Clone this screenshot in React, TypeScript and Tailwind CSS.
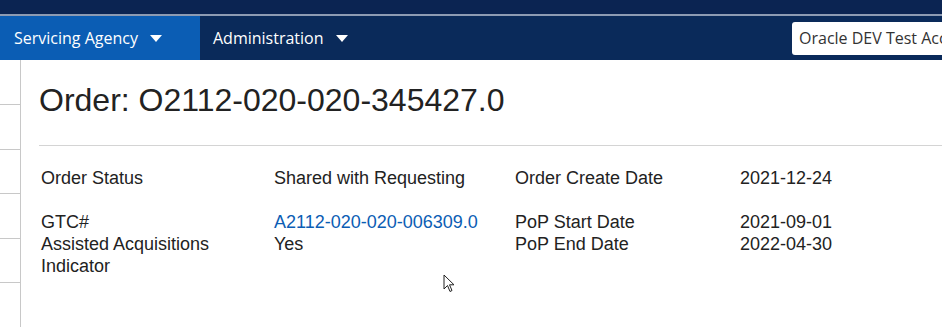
function Caret() {
  return (
    <svg width="12" height="7" viewBox="0 0 12 7" className="ml-[12px]">
      <path d="M0 0 L12 0 L6 7 Z" fill="white" />
    </svg>
  );
}

function Cursor() {
  return (
    <svg width="14" height="20" viewBox="0 0 14 20" className="absolute left-[443px] top-[274px]">
      <path d="M1 1 L1 15 L4.5 11.5 L7 17.5 L9 16.5 L6.5 10.8 L11 10.8 Z" fill="white" stroke="#222" strokeWidth="1" strokeLinejoin="round" />
    </svg>
  );
}

export default function App() {
  return (
    <div className="relative w-[942px] h-[327px] overflow-hidden bg-white" style={{ fontFamily: "Arial, 'Liberation Sans', sans-serif" }}>
      <div className="h-[14px] bg-[#0b2452]" />
      <div className="h-[2px] bg-[#8d9bb3]" />
      <nav className="h-[44px] bg-[#0a2a5a] flex items-center text-white text-[16px]" style={{ fontFamily: "'Open Sans', 'Noto Sans', sans-serif" }}>
        <div className="h-full w-[200px] bg-[#0b5db4] flex items-center pl-[14px]">
          Servicing Agency
          <Caret />
        </div>
        <div className="h-full flex items-center pl-[13px]">
          Administration
          <Caret />
        </div>
        <div className="ml-auto mr-[-30px] w-[180px] h-[33px] bg-white rounded-[3px] flex items-center pl-[7px] text-[#333] whitespace-nowrap overflow-hidden">
          Oracle DEV Test Account
        </div>
      </nav>
      <div className="flex">
        <div className="w-[21px] h-[267px] border-r border-[#c8c8c8] flex flex-col pt-[44px]">
          <div className="h-[45px] border-t border-[#c8c8c8]" />
          <div className="h-[45px] border-t border-[#c8c8c8]" />
          <div className="h-[45px] border-t border-[#c8c8c8]" />
          <div className="h-[45px] border-t border-[#c8c8c8]" />
          <div className="h-[45px] border-t border-[#c8c8c8]" />
        </div>
        <main className="flex-1 pl-[18px] text-[#222]">
          <h1 className="text-[32px] leading-[36px] mt-[22px]">Order: O2112-020-020-345427.0</h1>
          <div className="mt-[27px] border-t border-[#d4d4d4]" />
          <div className="grid grid-cols-[233px_241px_225px_1fr] pl-[2px] text-[18px] leading-[22px] mt-[21px]">
            <div>Order Status</div>
            <div>Shared with Requesting</div>
            <div>Order Create Date</div>
            <div>2021-12-24</div>
            <div className="mt-[22px]">GTC#</div>
            <div className="mt-[22px] text-[#0b5db4]">A2112-020-020-006309.0</div>
            <div className="mt-[22px]">PoP Start Date</div>
            <div className="mt-[22px]">2021-09-01</div>
            <div>Assisted Acquisitions<br />Indicator</div>
            <div>Yes</div>
            <div>PoP End Date</div>
            <div>2022-04-30</div>
          </div>
        </main>
      </div>
      <Cursor />
    </div>
  );
}
